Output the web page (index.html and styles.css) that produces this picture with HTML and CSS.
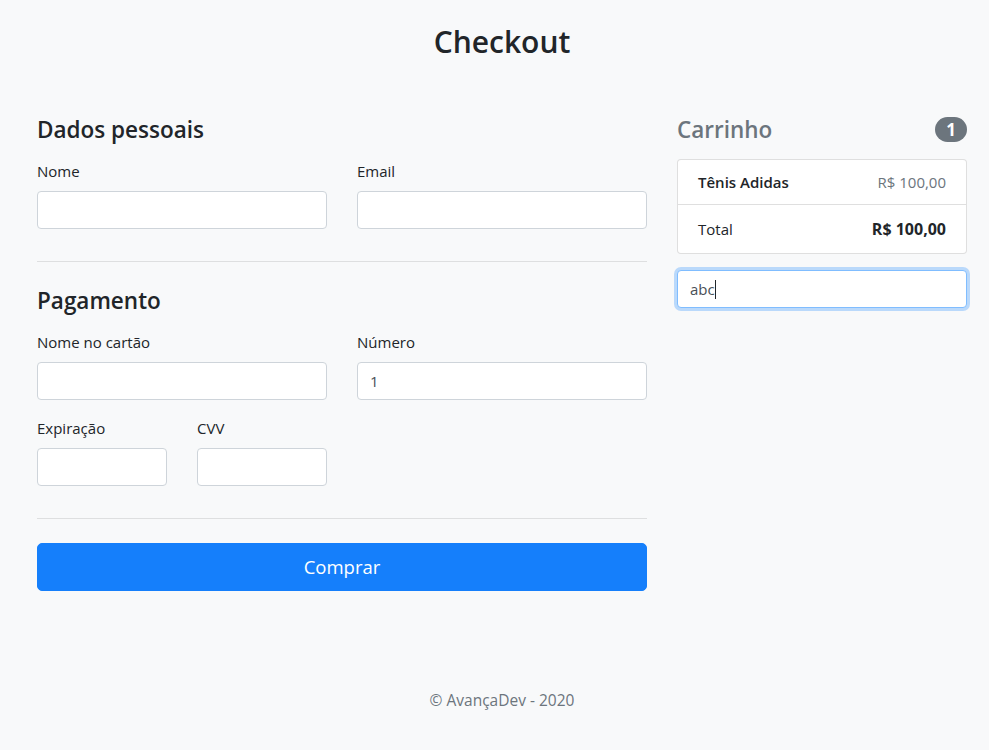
FILE: index.html
```html
<!DOCTYPE html>
<html lang="pt-BR">
<head>
<meta charset="utf-8">
<title>Checkout</title>
<link rel="stylesheet" href="styles.css">
</head>
<body>
<div class="container">
  <header class="page-header">
    <h2 class="page-title">Checkout</h2>
  </header>

  <div class="row">
    <main class="col-main">
      <h4 class="section-title">Dados pessoais</h4>
      <div class="form-row">
        <div class="form-group col-half">
          <label class="label" for="nome">Nome</label>
          <input class="input" id="nome" type="text">
        </div>
        <div class="form-group col-half">
          <label class="label" for="email">Email</label>
          <input class="input" id="email" type="text">
        </div>
      </div>

      <hr class="divider divider-section">

      <h4 class="section-title">Pagamento</h4>
      <div class="form-row">
        <div class="form-group col-half">
          <label class="label" for="cc-nome">Nome no cartão</label>
          <input class="input" id="cc-nome" type="text">
        </div>
        <div class="form-group col-half">
          <label class="label" for="cc-numero">Número</label>
          <input class="input" id="cc-numero" type="text" value="1">
        </div>
      </div>
      <div class="form-row">
        <div class="form-group col-quarter">
          <label class="label" for="cc-exp">Expiração</label>
          <input class="input" id="cc-exp" type="text">
        </div>
        <div class="form-group col-quarter">
          <label class="label" for="cc-cvv">CVV</label>
          <input class="input" id="cc-cvv" type="text">
        </div>
      </div>

      <hr class="divider">

      <button class="btn-primary" type="button">Comprar</button>
    </main>

    <aside class="col-side">
      <h4 class="cart-title">
        <span class="cart-label">Carrinho</span>
        <span class="badge">1</span>
      </h4>
      <ul class="list-group">
        <li class="list-item item-product">
          <h6 class="product-name">Tênis Adidas</h6>
          <span class="muted">R$ 100,00</span>
        </li>
        <li class="list-item item-total">
          <span>Total</span>
          <strong>R$ 100,00</strong>
        </li>
      </ul>
      <div class="input input-focus">abc<span class="caret"></span></div>
    </aside>
  </div>

  <footer class="footer">
    <p>© AvançaDev - 2020</p>
  </footer>
</div>
</body>
</html>
```

FILE: styles.css
```css
* { box-sizing: border-box; }

html, body {
  margin: 0;
  background: #f8f9fa;
}

body {
  font-family: "Open Sans", "Noto Sans", sans-serif;
  font-size: 15px;
  line-height: 1.5;
  color: #212529;
}

.container {
  width: 960px;
  padding: 0 15px;
  margin-left: 22px;
}

.page-header {
  padding-top: 23px;
  height: 114px;
  text-align: center;
}

.page-title {
  margin: 0;
  font-size: 30px;
  font-weight: 600;
  line-height: 38px;
}

.row {
  display: flex;
  gap: 30px;
}

.col-main { width: 610px; }
.col-side { width: 290px; }

.section-title {
  margin: 0 0 15px;
  padding-top: 1px;
  font-size: 22.5px;
  font-weight: 600;
  line-height: 29px;
}

.form-row {
  display: flex;
  gap: 30px;
}

.form-group { margin-bottom: 16px; }
.col-half { width: 290px; }
.col-quarter { width: 130px; }

.label {
  display: block;
  margin-bottom: 8px;
  line-height: 24px;
}

.input {
  display: block;
  width: 100%;
  height: 38px;
  padding: 6px 12px;
  font: inherit;
  line-height: 24px;
  color: #495057;
  background: #fff;
  border: 1px solid #ced4da;
  border-radius: 4px;
}

.input-focus {
  border-color: #80bdff;
  box-shadow: 0 0 0 3px rgba(0, 123, 255, 0.25);
}

.caret {
  display: inline-block;
  width: 1px;
  height: 19px;
  background: #212529;
  vertical-align: -4px;
}

.divider {
  margin: 16px 0 24px;
  border: 0;
  border-top: 1px solid rgba(0, 0, 0, 0.1);
}

.divider-section { margin-bottom: 23px; }

.btn-primary {
  display: block;
  width: 100%;
  height: 48px;
  padding: 8px 16px;
  font: inherit;
  font-size: 18.5px;
  line-height: 30px;
  color: #fff;
  background: #157ffb;
  border: 1px solid #157ffb;
  border-radius: 5px;
}

.cart-title {
  display: flex;
  align-items: center;
  justify-content: space-between;
  margin: 0 0 15px;
  padding-top: 1px;
  font-size: 22.5px;
  font-weight: 600;
  line-height: 29px;
}

.cart-label { color: #6c757d; }

.badge {
  display: inline-block;
  min-width: 32px;
  height: 25px;
  padding: 0 10px;
  border-radius: 13px;
  background: #6c757d;
  color: #fff;
  font-size: 17px;
  font-weight: 700;
  line-height: 25px;
  text-align: center;
}

.list-group {
  list-style: none;
  margin: 0 0 16px;
  padding: 0;
  background: #fff;
  border: 1px solid rgba(0, 0, 0, 0.125);
  border-radius: 4px;
}

.list-item {
  display: flex;
  justify-content: space-between;
  align-items: center;
  padding: 0 20px;
}

.item-product {
  height: 45px;
  border-bottom: 1px solid rgba(0, 0, 0, 0.125);
}

.item-total { height: 48px; }

.product-name {
  margin: 0;
  font-size: 15px;
  font-weight: 600;
  line-height: 19px;
}

.muted { color: #6c757d; }

.item-total strong { font-size: 16px; font-weight: 700; }

.footer {
  margin-top: 97px;
  text-align: center;
  color: #6c757d;
}

.footer p {
  margin: 0;
  font-size: 15.5px;
  line-height: 24px;
}
```
